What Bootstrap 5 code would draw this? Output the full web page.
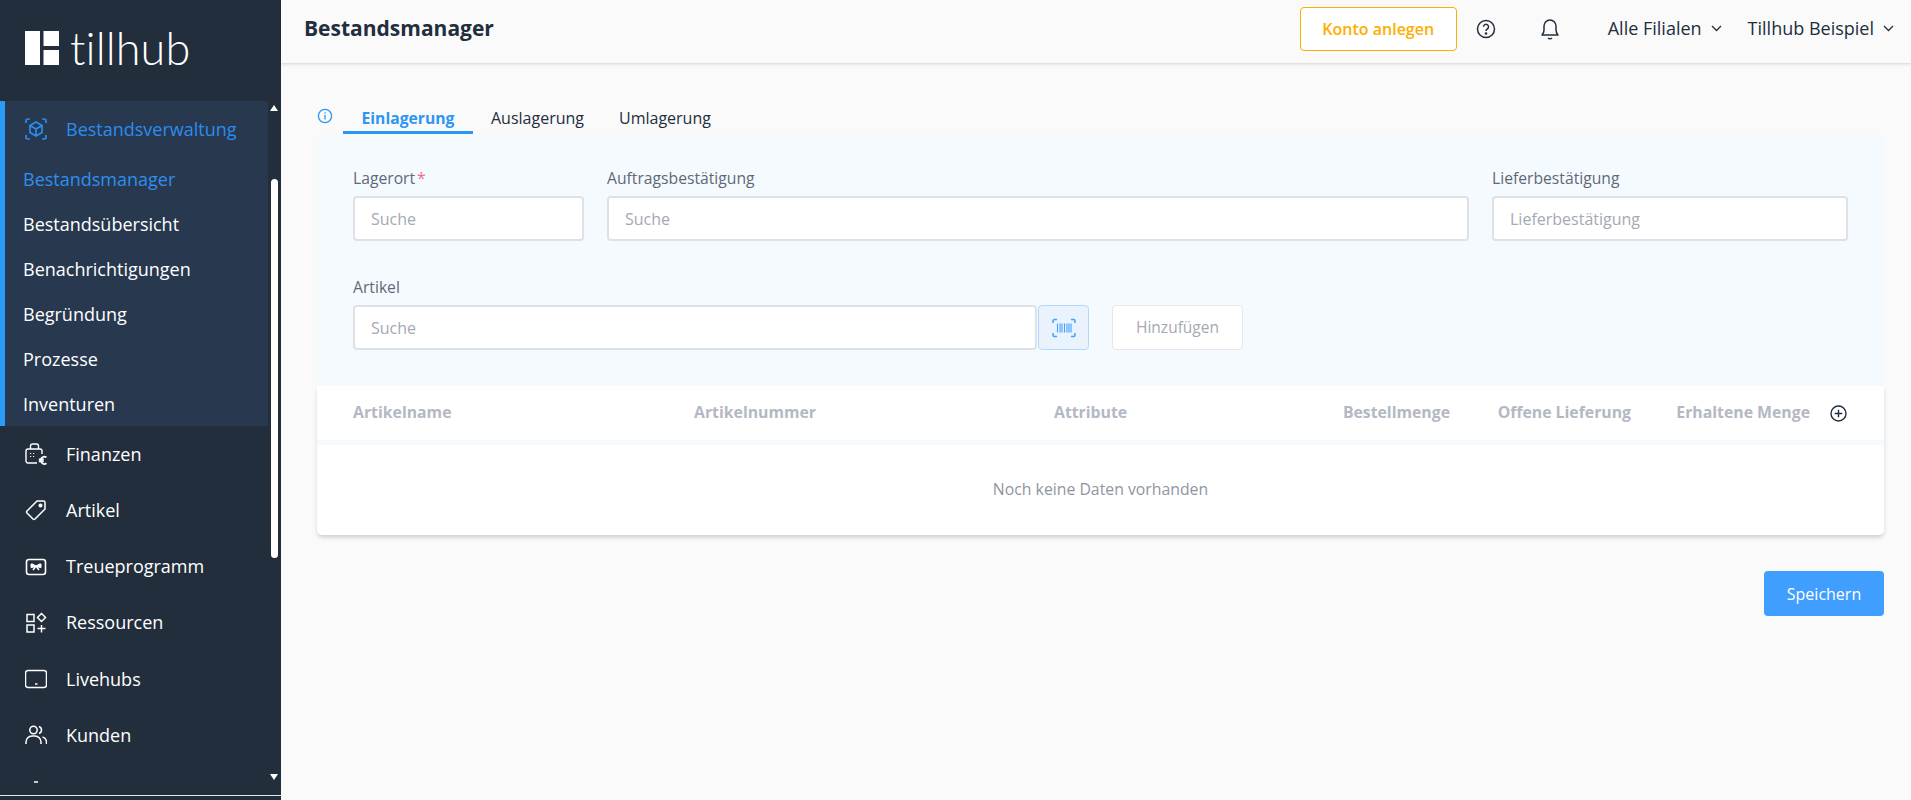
<!DOCTYPE html>
<html lang="de">
<head>
<meta charset="utf-8">
<title>Bestandsmanager</title>
<link href="https://cdn.jsdelivr.net/npm/bootstrap@5.3.0/dist/css/bootstrap.min.css" rel="stylesheet">
<style>
html,body{height:800px;overflow:hidden}
body{font-family:"Open Sans","Liberation Sans",sans-serif;font-size:16px;background:#fafafa;color:#232e3d}
.app-shell{height:800px}
.side{width:281px;flex:none;background:#232e3d;color:#fff;height:800px}
.logo-area{height:101px;padding:31px 0 0 25px;gap:11px}
.logo-mark{width:34px;height:34px}
.logo-word{font-family:"Lato","Open Sans",sans-serif;font-weight:300;font-size:45px;line-height:34px;letter-spacing:.1px;color:#fff}
.side-main{height:694px}
.side-menu{width:268px;flex:none;overflow:hidden;height:683px;font-size:18px}
.menu-active{background:#27384f;border-left:5px solid #2a9cf8;height:325px}
.menu-head{height:56px;padding-left:20px;color:#2a8df0;gap:19px}
.sub-item{height:45.1px;padding-left:18px;color:#fff;line-height:45px}
.sub-item.on{color:#2f8ff0}
.menu-item{height:56.25px;padding-left:25px;gap:19px;color:#fff}
.menu-item svg,.menu-head svg{flex:none;width:22px;height:22px}
.sb-track{width:13px;flex:none;padding:4px 0 0 2px}
.sb-up{width:0;height:0;border:4.5px solid transparent;border-top:0;border-bottom:6px solid #fff}
.sb-gap{height:68px}
.sb-thumb{width:7px;height:379px;background:#fff;border-radius:4px;margin-left:1px}
.sb-fill{flex:1}
.sb-down{width:0;height:0;border:4.5px solid transparent;border-bottom:0;border-top:6px solid #fff;margin-bottom:15px}
.side-line{height:1px;background:#e4e7ea}
.content{min-width:0}
.topbar{height:63px;background:#fafafa;box-shadow:0 1px 3px rgba(0,0,0,.16);padding:0 17px 6px 23px}
.page-title{font-size:21px;font-weight:700;color:#232e3d;margin:0}
.btn-konto{width:157px;height:44px;background:#fff;border:1px solid #ffad00;color:#ffad00;font-weight:600;font-size:16px;border-radius:4px;padding:0}
.top-ic{color:#232e3d;flex:none}
.top-help{margin-left:19px}
.top-bell{margin-left:44px}
.top-drop{color:#232e3d;gap:9px;font-size:18px}
.drop-a{margin-left:48px}
.drop-b{margin-left:26px}
.work{padding:0 27px 0 36px}
.tab-row{height:71px}
.info-box{height:36px}
.info-ic{width:16px;height:16px;margin-right:10px}
.tab-link{height:30px;line-height:28px;font-size:16px;color:#232e3d}
.tab-link.on{width:130px;text-align:center;color:#2d96f3;font-weight:700;font-size:15.7px;border-bottom:3px solid #2d96f3}
.tab-a{width:130px;padding-left:18px}
.tab-b{padding-left:16px}
.panel{background:#f5faff;height:252px;padding:34px 36px 0}
.field-row{gap:23px;height:73px}
.f-label{font-size:15.7px;color:#5f6976;line-height:21px;margin-bottom:7px;display:block}
.req{color:#f56c8c;margin-left:2px}
.f-input{height:45px;border:2px solid #dde1e8;border-radius:4px;background:#fff;font-size:16px;padding:0 16px;color:#232e3d;box-shadow:none}
.f-input::placeholder{color:#a4a9b3;opacity:1}
.w-lager{width:231px;flex:none}
.w-lief{width:356px;flex:none}
.art-block{margin-top:36px}
.art-input{width:684px}
.scan-btn{width:51px;height:45px;background:#eaf3fd;border:1px solid #b3d8ff;border-radius:4px;padding:0;margin-left:1px}
.add-btn{width:131px;height:45px;background:#fff;border:1px solid #e4e7ed;color:#a4a9b3;font-size:15.5px;border-radius:4px;padding:0;margin-left:23px}
.data-tbl{background:#fff;box-shadow:0 3px 5px -1px rgba(0,0,0,.2);border-radius:0 0 5px 5px;height:149px}
.tbl-head{height:54px;color:#b3b8c4;font-weight:700;font-size:15.8px;padding-left:36px}
.tbl-strip{height:5px;background:#f5faff}
.tbl-empty{height:90px;color:#8f959f;font-size:15.8px}
.c1{width:341px}.c2{width:360px}.c3{width:215px}
.c4{width:181px;text-align:right}.c5{width:181px;text-align:right}.c6{width:179px;text-align:right}
.plus-ic{margin-left:20px}
.save-row{margin-top:36px}
.save-btn{width:120px;height:45px;background:#409eff;border:0;color:#fff;border-radius:4px;font-size:16px;padding:0}
</style>
</head>
<body>
<div class="app-shell d-flex">
  <aside class="side">
    <div class="logo-area d-flex">
      <svg class="logo-mark" viewBox="0 0 34 34"><path fill="#fff" d="M0 0h15v34H0zM18.500 0H34v15H18.500zM18.500 19H34v15H18.500z"/></svg>
      <span class="logo-word">tillhub</span>
    </div>
    <div class="side-main d-flex">
      <div class="side-menu">
        <div class="menu-active">
          <div class="menu-head d-flex align-items-center">
            <svg viewBox="0 0 22 22" fill="none" stroke="#2a8df0" stroke-width="1.700"><path d="M1 5V2.500A1.500 1.500 0 0 1 2.500 1H5M17 1h2.500A1.500 1.500 0 0 1 21 2.500V5M21 17v2.500a1.500 1.500 0 0 1-1.500 1.500H17M5 21H2.500A1.500 1.500 0 0 1 1 19.500V17"/><path d="M11 4 17 7.500v7L11 18l-6-3.500v-7zM5 7.500l6 3.500 6-3.500M11 11v7"/></svg>
            <span>Bestandsverwaltung</span>
          </div>
          <div class="sub-item on">Bestandsmanager</div>
          <div class="sub-item">Bestandsübersicht</div>
          <div class="sub-item">Benachrichtigungen</div>
          <div class="sub-item">Begründung</div>
          <div class="sub-item">Prozesse</div>
          <div class="sub-item">Inventuren</div>
        </div>
        <div class="menu-item d-flex align-items-center">
          <svg viewBox="0 0 22 22" fill="none" stroke="#fff" stroke-width="1.400"><path d="M5.500 6V3a2 2 0 0 1 2-2h4a2 2 0 0 1 2 2v3M12 20H3a2 2 0 0 1-2-2V8a2 2 0 0 1 2-2h12a2 2 0 0 1 2 2v3"/><path d="M5 10.500h1.200M8 10.500h1.200M5 13.500h1.200M8 13.500h1.200" stroke-width="1.200"/><path d="M21.500 14.400a3.600 3.600 0 1 0 0 5.800M13.800 16.300h5M13.800 18.300h5" stroke-width="1.700"/></svg>
          <span>Finanzen</span>
        </div>
        <div class="menu-item d-flex align-items-center">
          <svg viewBox="0 0 22 22" fill="none" stroke="#fff" stroke-width="1.500"><path d="M12 2h6.500A1.500 1.500 0 0 1 20 3.500V10L10 20a1.500 1.500 0 0 1-2 0l-6-6a1.500 1.500 0 0 1 0-2z" stroke-linejoin="round"/><circle cx="15.500" cy="6.500" r="1.300" fill="#fff"/></svg>
          <span>Artikel</span>
        </div>
        <div class="menu-item d-flex align-items-center">
          <svg viewBox="0 0 22 22" fill="none" stroke="#fff" stroke-width="1.600"><rect x="1.500" y="3.500" width="19" height="15" rx="2.500"/><path d="M11 10 7.500 8H6v3.500h1.500zM11 10l3.500-2H16v3.500h-1.500z" fill="#fff" stroke-width="1"/><path d="M11 10l-3 4M11 10l3 4" stroke-width="1.500"/></svg>
          <span>Treueprogramm</span>
        </div>
        <div class="menu-item d-flex align-items-center">
          <svg viewBox="0 0 22 22" fill="none" stroke="#fff" stroke-width="1.500"><rect x="2" y="2.500" width="7" height="7"/><rect x="2" y="13" width="7" height="7"/><path d="M16.500 1.500 20.500 5.500 16.500 9.500 12.500 5.500zM16.500 13v7.500M12.500 16.500h8"/></svg>
          <span>Ressourcen</span>
        </div>
        <div class="menu-item d-flex align-items-center">
          <svg viewBox="0 0 22 22" fill="none" stroke="#fff" stroke-width="1.500"><rect x="0.500" y="2.500" width="21" height="17" rx="2.500"/><path d="M10 16h2.500"/></svg>
          <span>Livehubs</span>
        </div>
        <div class="menu-item d-flex align-items-center">
          <svg viewBox="0 0 22 22" fill="none" stroke="#fff" stroke-width="1.500"><circle cx="8.500" cy="6" r="3.700"/><path d="M1 20v-2a6 6 0 0 1 6-6h3a6 6 0 0 1 6 6v2M14 2.500a3.700 3.700 0 0 1 0 7M17.500 13a5.500 5.500 0 0 1 4 5v2"/></svg>
          <span>Kunden</span>
        </div>
        <div class="menu-item d-flex align-items-center">
          <svg viewBox="0 0 22 22" fill="none" stroke="#fff" stroke-width="1.500"><path d="M9 1h4"/></svg>
        </div>
      </div>
      <div class="sb-track d-flex flex-column">
        <div class="sb-up"></div>
        <div class="sb-gap"></div>
        <div class="sb-thumb"></div>
        <div class="sb-fill"></div>
        <div class="sb-down"></div>
      </div>
    </div>
    <div class="side-line"></div>
  </aside>
  <div class="content flex-grow-1">
    <header class="topbar d-flex align-items-center">
      <h1 class="page-title flex-grow-1">Bestandsmanager</h1>
      <button type="button" class="btn btn-konto">Konto anlegen</button>
      <svg class="top-ic top-help" width="20" height="20" viewBox="0 0 20 20" fill="none" stroke="#232e3d" stroke-width="1.500"><circle cx="10" cy="10" r="8.500"/><path d="M7.500 7.800a2.500 2.500 0 1 1 3.800 2.200c-.9.500-1.300 1-1.300 2"/><circle cx="10" cy="14.500" r=".6" fill="#232e3d"/></svg>
      <svg class="top-ic top-bell" width="20" height="22" viewBox="0 0 20 22" fill="none" stroke="#232e3d" stroke-width="1.500"><path d="M2 17c1.500-1.500 2-3 2-5V8a6 6 0 0 1 12 0v4c0 2 .5 3.500 2 5z" stroke-linejoin="round"/><path d="M8 20c1 .9 3 .9 4 0"/></svg>
      <div class="top-drop drop-a d-flex align-items-center"><span>Alle Filialen</span><svg width="11" height="7" viewBox="0 0 11 7" fill="none" stroke="#232e3d" stroke-width="1.300"><path d="M1 1l4.500 4.500L10 1"/></svg></div>
      <div class="top-drop drop-b d-flex align-items-center"><span>Tillhub Beispiel</span><svg width="11" height="7" viewBox="0 0 11 7" fill="none" stroke="#232e3d" stroke-width="1.300"><path d="M1 1l4.500 4.500L10 1"/></svg></div>
    </header>
    <main class="work">
      <div class="tab-row d-flex align-items-end">
        <div class="info-box d-flex align-items-center">
          <svg class="info-ic" viewBox="0 0 16 16" fill="none" stroke="#2d96f3" stroke-width="1.300"><circle cx="8" cy="8" r="6.600"/><path d="M8 7v4.500M8 4.300v1.300"/></svg>
        </div>
        <div class="tab-link on">Einlagerung</div>
        <div class="tab-link tab-a">Auslagerung</div>
        <div class="tab-link tab-b">Umlagerung</div>
      </div>
      <section class="panel">
        <div class="field-row d-flex">
          <div class="w-lager"><label class="f-label">Lagerort<span class="req">*</span></label><input class="form-control f-input" placeholder="Suche"></div>
          <div class="flex-grow-1"><label class="f-label">Auftragsbestätigung</label><input class="form-control f-input" placeholder="Suche"></div>
          <div class="w-lief"><label class="f-label">Lieferbestätigung</label><input class="form-control f-input" placeholder="Lieferbestätigung"></div>
        </div>
        <div class="art-block">
          <label class="f-label">Artikel</label>
          <div class="d-flex">
            <input class="form-control f-input art-input" placeholder="Suche">
            <button type="button" class="btn scan-btn d-flex align-items-center justify-content-center" aria-label="Scannen">
              <svg width="24" height="20" viewBox="0 0 24 20" fill="none" stroke="#409eff" stroke-width="1.500"><path d="M1 5V3a1.500 1.500 0 0 1 1.500-1.500H5M19 1.500h2.500A1.500 1.500 0 0 1 23 3v2M23 15v2a1.500 1.500 0 0 1-1.500 1.500H19M5 18.500H2.500A1.500 1.500 0 0 1 1 17v-2"/><path d="M5.500 5.500v9M8 5.500v9M10 5.500v9M12.500 5.500v9M15 5.500v9M17 5.500v9M19 5.500v9" stroke-width="1.100"/></svg>
            </button>
            <button type="button" class="btn add-btn">Hinzufügen</button>
          </div>
        </div>
      </section>
      <section class="data-tbl">
        <div class="tbl-head d-flex align-items-center">
          <div class="c1">Artikelname</div><div class="c2">Artikelnummer</div><div class="c3">Attribute</div>
          <div class="c4">Bestellmenge</div><div class="c5">Offene Lieferung</div><div class="c6">Erhaltene Menge</div>
          <svg class="plus-ic" width="17" height="17" viewBox="0 0 17 17" fill="none" stroke="#232e3d" stroke-width="1.400"><circle cx="8.500" cy="8.500" r="7.500"/><path d="M8.500 4.700v7.600M4.700 8.500h7.600"/></svg>
        </div>
        <div class="tbl-strip"></div>
        <div class="tbl-empty d-flex align-items-center justify-content-center">Noch keine Daten vorhanden</div>
      </section>
      <div class="save-row d-flex justify-content-end"><button type="button" class="btn save-btn">Speichern</button></div>
    </main>
  </div>
</div>
<script src="https://cdn.jsdelivr.net/npm/bootstrap@5.3.0/dist/js/bootstrap.bundle.min.js"></script>
</body>
</html>
